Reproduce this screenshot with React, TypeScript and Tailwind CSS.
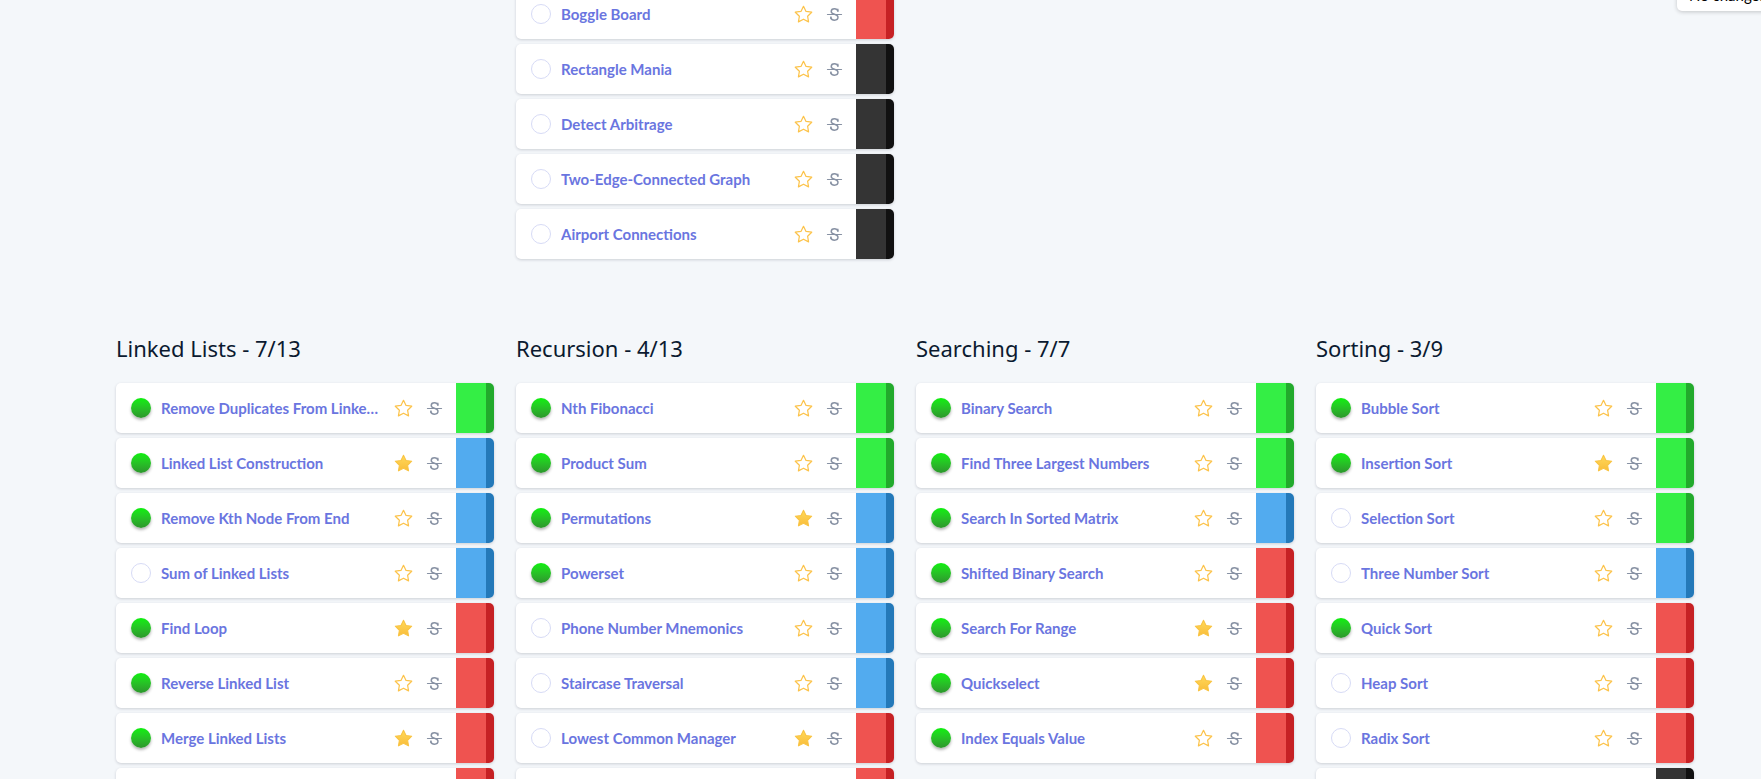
type Level = 'easy' | 'medium' | 'hard' | 'expert';

interface Question {
    name: string;
    done?: boolean;
    starred?: boolean;
    level: Level;
}

interface Category {
    title: string;
    questions: Question[];
}

const levelColors: Record<Level, { light: string; dark: string }> = {
    easy: { light: 'bg-[#34ee45]', dark: 'bg-[#22aa2c]' },
    medium: { light: 'bg-[#52abef]', dark: 'bg-[#2479b9]' },
    hard: { light: 'bg-[#ef5350]', dark: 'bg-[#c62124]' },
    expert: { light: 'bg-[#343434]', dark: 'bg-[#111111]' },
};

const graphsTail: Question[] = [
    { name: 'Boggle Board', level: 'hard' },
    { name: 'Rectangle Mania', level: 'expert' },
    { name: 'Detect Arbitrage', level: 'expert' },
    { name: 'Two-Edge-Connected Graph', level: 'expert' },
    { name: 'Airport Connections', level: 'expert' },
];

const categories: Category[] = [
    {
        title: 'Linked Lists - 7/13',
        questions: [
            { name: 'Remove Duplicates From Linked List', done: true, level: 'easy' },
            { name: 'Linked List Construction', done: true, starred: true, level: 'medium' },
            { name: 'Remove Kth Node From End', done: true, level: 'medium' },
            { name: 'Sum of Linked Lists', level: 'medium' },
            { name: 'Find Loop', done: true, starred: true, level: 'hard' },
            { name: 'Reverse Linked List', done: true, level: 'hard' },
            { name: 'Merge Linked Lists', done: true, starred: true, level: 'hard' },
            { name: 'Shift Linked List', done: true, level: 'hard' },
        ],
    },
    {
        title: 'Recursion - 4/13',
        questions: [
            { name: 'Nth Fibonacci', done: true, level: 'easy' },
            { name: 'Product Sum', done: true, level: 'easy' },
            { name: 'Permutations', done: true, starred: true, level: 'medium' },
            { name: 'Powerset', done: true, level: 'medium' },
            { name: 'Phone Number Mnemonics', level: 'medium' },
            { name: 'Staircase Traversal', level: 'medium' },
            { name: 'Lowest Common Manager', starred: true, level: 'hard' },
            { name: 'Interweaving Strings', level: 'hard' },
        ],
    },
    {
        title: 'Searching - 7/7',
        questions: [
            { name: 'Binary Search', done: true, level: 'easy' },
            { name: 'Find Three Largest Numbers', done: true, level: 'easy' },
            { name: 'Search In Sorted Matrix', done: true, level: 'medium' },
            { name: 'Shifted Binary Search', done: true, level: 'hard' },
            { name: 'Search For Range', done: true, starred: true, level: 'hard' },
            { name: 'Quickselect', done: true, starred: true, level: 'hard' },
            { name: 'Index Equals Value', done: true, level: 'hard' },
        ],
    },
    {
        title: 'Sorting - 3/9',
        questions: [
            { name: 'Bubble Sort', done: true, level: 'easy' },
            { name: 'Insertion Sort', done: true, starred: true, level: 'easy' },
            { name: 'Selection Sort', level: 'easy' },
            { name: 'Three Number Sort', level: 'medium' },
            { name: 'Quick Sort', done: true, level: 'hard' },
            { name: 'Heap Sort', level: 'hard' },
            { name: 'Radix Sort', level: 'hard' },
            { name: 'Shell Sort', level: 'expert' },
        ],
    },
];

const starPoints = '12 2.6 14.9 8.5 21.4 9.4 16.7 14 17.8 20.4 12 17.4 6.2 20.4 7.3 14 2.6 9.4 9.1 8.5';

function StarIcon({ filled }: { filled?: boolean }) {
    return (
        <svg width="21" height="21" viewBox="0 0 24 24" className="shrink-0">
            <defs>
                <linearGradient id="starFill" x1="0" y1="0" x2="0" y2="1">
                    <stop offset="0%" stopColor="#ffd95a" />
                    <stop offset="100%" stopColor="#f9bd3b" />
                </linearGradient>
            </defs>
            {filled ? (
                <polygon points={starPoints} fill="url(#starFill)" stroke="#f9c443" strokeWidth="1.2" strokeLinejoin="round" />
            ) : (
                <polygon points={starPoints} fill="none" stroke="#fcc34a" strokeWidth="1.4" strokeLinejoin="round" />
            )}
        </svg>
    );
}

// struck-through S, drawn as an icon
function StrikeIcon() {
    return (
        <svg width="17" height="17" viewBox="0 0 24 24" fill="none" className="shrink-0 text-[#8791a3]">
            <path
                d="M16.8 7.2C16.2 5.3 14.4 4 12 4 9.2 4 7.4 5.6 7.4 7.7c0 2.2 2 3.2 4.6 3.9 2.9.8 4.9 1.9 4.9 4.4 0 2.3-2 4-4.9 4-2.8 0-4.6-1.4-5.2-3.5"
                stroke="currentColor"
                strokeWidth="2.1"
                strokeLinecap="round"
            />
            <path d="M16.8 4.6v2.6M7 15.2v2.6" stroke="currentColor" strokeWidth="1.8" strokeLinecap="round" />
            <path d="M2 12h20" stroke="currentColor" strokeWidth="1.5" strokeLinecap="round" />
        </svg>
    );
}

function StatusDot({ done }: { done?: boolean }) {
    if (done) {
        return (
            <div className="w-5 h-5 rounded-full shrink-0 bg-gradient-to-b from-[#0bf00b] to-[#2c962c] shadow-[0_2px_3px_rgba(0,0,0,0.3)]" />
        );
    }
    return <div className="w-5 h-5 rounded-full shrink-0 bg-white border border-[#d7dbf6]" />;
}

function QuestionCard({ q }: { q: Question }) {
    const colors = levelColors[q.level];
    return (
        <div className="flex h-[50px] w-[378px] rounded-[5px] bg-white shadow-[0_1px_3px_rgba(20,30,50,0.18)]">
            <div className="flex items-center w-[340px] pl-[15px] pr-[12px]">
                <StatusDot done={q.done} />
                <span className="ml-[10px] w-[219px] truncate text-[15px] font-bold text-[#6a75e0] font-['Lato','Noto_Sans',sans-serif]">
                    {q.name}
                </span>
                <div className="ml-[13px]">
                    <StarIcon filled={q.starred} />
                </div>
                <div className="ml-[12px]">
                    <StrikeIcon />
                </div>
            </div>
            <div className="flex w-[38px] rounded-r-[5px] overflow-hidden">
                <div className={`w-[30px] ${colors.light}`} />
                <div className={`w-[8px] ${colors.dark}`} />
            </div>
        </div>
    );
}

function QuestionList({ questions }: { questions: Question[] }) {
    return (
        <div className="flex flex-col gap-[5px]">
            {questions.map((q) => (
                <QuestionCard key={q.name} q={q} />
            ))}
        </div>
    );
}

export default function App() {
    return (
        <div className="relative min-h-screen h-[779px] overflow-hidden bg-[#f4f7fa] font-['Lato','Noto_Sans',sans-serif]">
            <div className="pl-[116px]">
                <div className="flex gap-[22px] -mt-[11px]">
                    <div className="w-[378px]" />
                    <QuestionList questions={graphsTail} />
                </div>

                <div className="flex gap-[22px] items-start mt-[74px]">
                    {categories.map((cat) => (
                        <div key={cat.title} className="w-[378px]">
                            <h2 className="h-[30px] leading-[30px] mb-[20px] text-[22px] text-[#0b1a30] font-['Noto_Sans','Open_Sans',sans-serif]">
                                {cat.title}
                            </h2>
                            <QuestionList questions={cat.questions} />
                        </div>
                    ))}
                </div>
            </div>

            <div className="absolute top-[-21px] left-[1677px] w-[130px] h-[32px] px-3 flex items-center rounded-[5px] bg-white shadow-[0_1px_4px_rgba(0,0,0,0.2)] text-[15px] text-black font-['Lato','Noto_Sans',sans-serif]">
                No changes
            </div>
        </div>
    );
}
